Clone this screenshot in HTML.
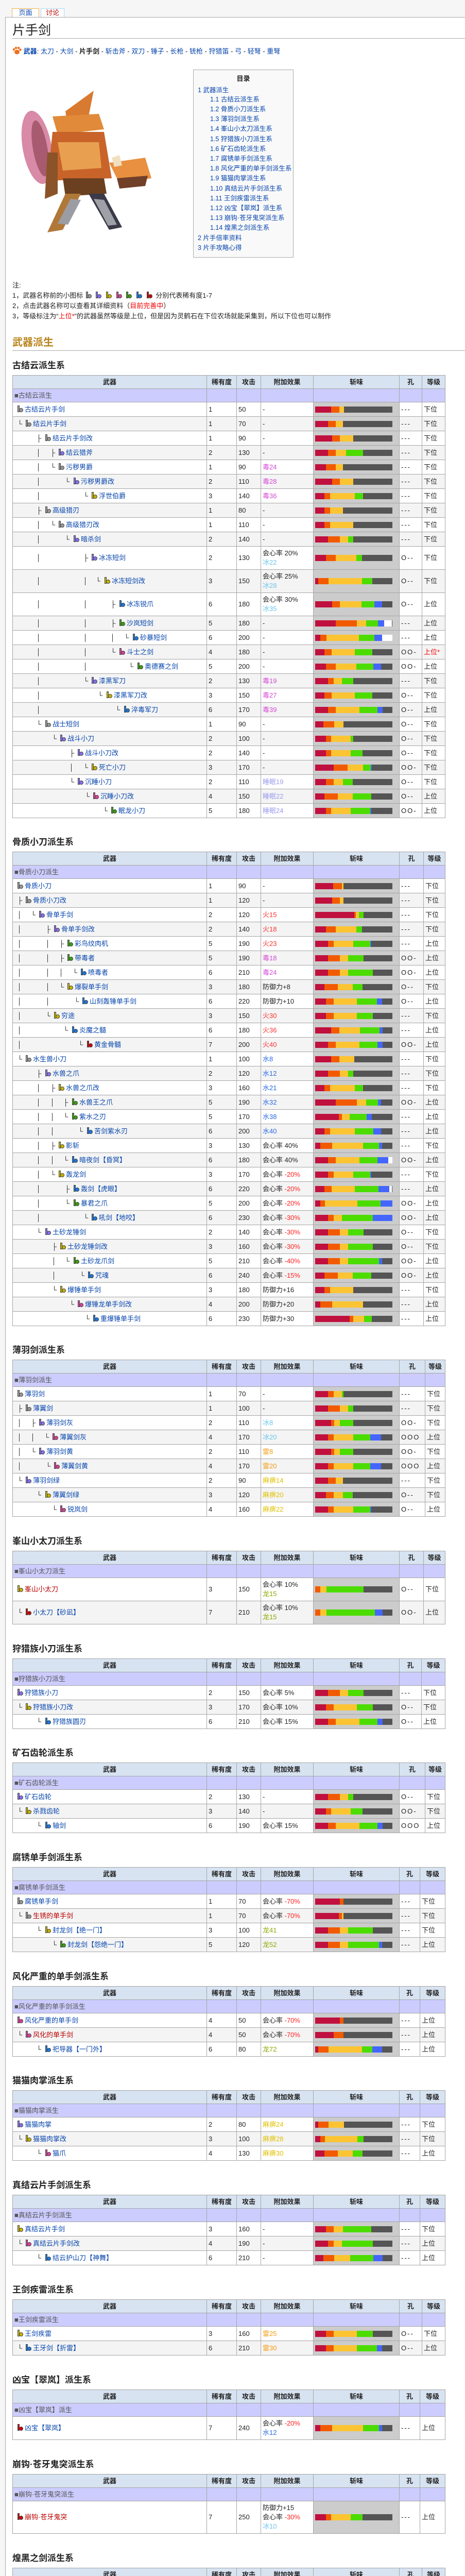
<!DOCTYPE html>
<html style="height:5121px;overflow:hidden"><head><meta charset="utf-8"><style>
html,body{margin:0;padding:0}
body{width:903px;height:5121px;background:#f6f6f6;position:relative;font-family:"Liberation Sans","Noto Sans CJK SC",sans-serif;font-size:13px;color:#222;overflow:hidden}
#c{position:absolute;left:10px;top:33px;width:893px;height:5080px;background:#fff;border-left:1px solid #a7a7a7;border-top:1px solid #a7a7a7}
.tab{position:absolute;top:16px;height:16px;border:1px solid #a7d7f9;border-bottom:none;background:#fff;font-size:13px;line-height:16px;text-align:center}
a,.bl{color:#0645ad;text-decoration:none}
.red{color:#e00}
.rl{color:#ba0000}
.abs{position:absolute}
.toc{position:absolute;left:375px;top:135px;width:193px;height:363px;border:1px solid #aaa;background:#f9f9f9}
.toc div{position:absolute;white-space:nowrap;color:#0645ad;font-size:12.5px;line-height:18px}
.sec{position:absolute;left:24px;width:840px}
.h3{height:66px;position:relative}
.h3 div{position:absolute;top:37px;left:0;font-weight:bold;font-size:17px;line-height:22px;white-space:nowrap}
table{border-collapse:collapse;table-layout:fixed;width:840px}
td,th{border:1px solid #a5a5a5;padding:0 0 0 3px;font-size:13px;white-space:nowrap;overflow:hidden;line-height:18px}
tr{height:28px}
tr.hd{height:26px}
tr.d{height:45px}
tr.t{height:63px}
th{background:#d7e3f1;font-weight:bold;text-align:center;padding:0}
tr.g td{background:#ccf;color:#555}
tbody tr:nth-child(even){background:#f4f4f4}
td.w{position:relative}
td.w i,td.w span{position:absolute;top:50%;margin-top:-9px;line-height:18px;font-style:normal;white-space:nowrap}
td.w span{color:#0645ad}
td.w span.rl{color:#ba0000}
td.s{background:#ccc !important;padding-left:3px}
p{margin:0;display:flex;width:150px;height:12px;background:#555}
u{display:block;height:12px;text-decoration:none;flex:none}
.R{background:#c0103e}.O{background:#f25a00}.Y{background:#fcc432}.G{background:#4cdc00}.B{background:#4466ff}.W{background:#fff}
td.k{letter-spacing:2px}
b{display:inline-block;position:relative;width:14px;height:15px;vertical-align:-3px;margin-right:2px}
b:before{content:"";position:absolute;left:2px;top:0;width:4px;height:13px;background:currentColor;border:1px solid #444;box-sizing:border-box}
b:after{content:"";position:absolute;left:5px;top:5px;width:8px;height:8px;border-radius:50%;background:currentColor;border:1px solid #444;box-sizing:border-box}
.c1{color:#999}.c2{color:#8a70f0}.c3{color:#c8b400}.c4{color:#d8409a}.c5{color:#3aa010}.c6{color:#1a78e0}.c7{color:#c00}
.ep{color:#d64ad6}.ei{color:#6cc6ee}.ef{color:#f33}.ew{color:#2a6ae8}.et{color:#f39c12}.ea{color:#e2c000}.es{color:#9c9cf0}.ed{color:#8fa800}.en{color:#f22}
</style></head><body>
<div id="c"></div>
<div class="tab" style="left:23px;width:51px;border-color:#f0b040"><span class="bl">页面</span></div>
<div class="tab" style="left:79px;width:44px"><span class="rl">讨论</span></div>
<div class="abs" style="left:24px;top:44px;font-size:25px;line-height:30px">片手剑</div>
<div class="abs" style="left:24px;top:74px;width:879px;height:1px;background:#aaa"></div>
<div class="abs" style="left:24px;top:90px;line-height:18px;white-space:nowrap">
<svg width="18" height="17" style="vertical-align:-3px" viewBox="0 0 18 17"><ellipse cx="9" cy="11" rx="5" ry="4.5" fill="#f07020"/><circle cx="3" cy="6" r="2.3" fill="#f07020"/><circle cx="7" cy="3" r="2.3" fill="#f07020"/><circle cx="12" cy="3" r="2.3" fill="#f07020"/><circle cx="15.5" cy="6.5" r="2.3" fill="#f07020"/></svg>
<strong class="bl">武器</strong>: <a>太刀</a> - <a>大剑</a> - <strong>片手剑</strong> - <a>斩击斧</a> - <a>双刀</a> - <a>锤子</a> - <a>长枪</a> - <a>铳枪</a> - <a>狩猎笛</a> - <a>弓</a> - <a>轻弩</a> - <a>重弩</a></div>

<svg class="abs" style="left:32px;top:176px" width="262" height="282" viewBox="0 0 262 282">
<ellipse cx="40" cy="110" rx="28" ry="72" fill="#d88aa6" transform="rotate(-10 40 110)"/>
<ellipse cx="46" cy="112" rx="14" ry="55" fill="#a85a70" transform="rotate(-10 46 112)"/>
<path d="M95 40 L150 0 L140 50 L100 70Z" fill="#d87a30"/>
<path d="M70 50 L160 45 L170 75 L80 85Z" fill="#e08a3a"/>
<path d="M70 80 L170 80 L185 170 L60 175Z" fill="#c8642a"/>
<path d="M80 100 L160 100 L165 150 L90 155Z" fill="#e8a050"/>
<path d="M60 120 L80 120 L80 200 L55 210Z" fill="#8a5428"/>
<path d="M90 170 L170 170 L175 200 L95 205Z" fill="#6a4020"/>
<path d="M95 200 L125 200 L90 270 L60 275 Z" fill="#b07838"/>
<path d="M140 200 L170 200 L205 265 L180 270Z" fill="#3a3a48"/>
<path d="M150 210 L170 212 L195 260 L178 262Z" fill="#a0a0a8"/>
<path d="M105 210 L125 212 L100 260 L80 258Z" fill="#9c9ca4"/>
<path d="M180 140 L250 130 L262 170 L200 180Z" fill="#e89040"/>
<path d="M195 170 L255 165 L250 185 L200 190Z" fill="#704028"/>
<path d="M185 130 L200 125 L205 145 L190 148Z" fill="#f0e0c0"/>
</svg>

<div class="toc">
<div style="left:0;width:193px;text-align:center;top:8px;font-weight:bold;color:#222;font-size:13px">目录</div>
<div style="left:8px;top:30px">1 武器派生</div>
<div style="left:32px;top:48px">1.1 古结云派生系</div>
<div style="left:32px;top:67px">1.2 骨质小刀派生系</div>
<div style="left:32px;top:86px">1.3 薄羽剑派生系</div>
<div style="left:32px;top:105px">1.4 峯山小太刀派生系</div>
<div style="left:32px;top:125px">1.5 狩猎族小刀派生系</div>
<div style="left:32px;top:144px">1.6 矿石齿轮派生系</div>
<div style="left:32px;top:163px">1.7 腐锈单手剑派生系</div>
<div style="left:32px;top:182px">1.8 风化严重的单手剑派生系</div>
<div style="left:32px;top:201px">1.9 猫猫肉掌派生系</div>
<div style="left:32px;top:221px">1.10 真结云片手剑派生系</div>
<div style="left:32px;top:240px">1.11 王剑疾雷派生系</div>
<div style="left:32px;top:259px">1.12 凶宝【翠岚】派生系</div>
<div style="left:32px;top:278px">1.13 崩钩·苍牙鬼突派生系</div>
<div style="left:32px;top:297px">1.14 煌黑之剑派生系</div>
<div style="left:8px;top:317px">2 片手倍率资料</div>
<div style="left:8px;top:336px">3 片手攻略心得</div>
</div>

<div class="abs" style="left:24px;top:544px;line-height:20px;white-space:nowrap">注:<br>1，武器名称前的小图标 <b class="c1"></b> <b class="c2"></b> <b class="c3"></b> <b class="c4"></b> <b class="c5"></b> <b class="c6"></b> <b class="c7"></b> 分别代表稀有度1-7<br>2，点击武器名称可以查看其详细资料（<span class="red">目前完善中</span>）<br>3，等级标注为“<span class="red">上位*</span>”的武器虽然等级是上位，但是因为灵鹤石在下位农场就能采集到，所以下位也可以制作</div>
<div class="abs" style="left:24px;top:652px;font-size:20px;line-height:26px;font-weight:bold;color:#b8841c">武器派生</div>
<div class="abs" style="left:24px;top:680px;width:879px;height:1px;background:#aaa"></div>

<!-- T1 -->
<div class="sec" style="top:662px"><div class="h3"><div>古结云派生系</div></div>
<table><colgroup><col style="width:377px"><col style="width:58px"><col style="width:47px"><col style="width:102px"><col style="width:167px"><col style="width:44px"><col style="width:45px"></colgroup>
<thead><tr class="hd"><th>武器</th><th>稀有度</th><th>攻击</th><th>附加效果</th><th>斩味</th><th>孔</th><th>等级</th></tr>
<tr class="hd g"><td>■古结云派生</td><td></td><td></td><td></td><td class="s" style="background:#ccf!important"></td><td></td><td></td></tr></thead><tbody>
<tr><td class="w"><span style="left:7px"><b class="c1"></b>古结云片手剑</span></td><td>1</td><td>50</td><td>-</td><td class="s"><p><u class="R" style="width:31px"></u><u class="O" style="width:16px"></u><u class="Y" style="width:9px"></u></p></td><td class="k">---</td><td>下位</td></tr>
<tr><td class="w"><i style="left:9px">└</i><span style="left:23px"><b class="c1"></b>结云片手剑</span></td><td>1</td><td>70</td><td>-</td><td class="s"><p><u class="R" style="width:25px"></u><u class="O" style="width:15px"></u><u class="Y" style="width:14px"></u></p></td><td class="k">---</td><td>下位</td></tr>
<tr><td class="w"><i style="left:46px">├</i><span style="left:61px"><b class="c1"></b>结云片手剑改</span></td><td>1</td><td>90</td><td>-</td><td class="s"><p><u class="R" style="width:33px"></u><u class="O" style="width:15px"></u><u class="Y" style="width:26px"></u></p></td><td class="k">---</td><td>下位</td></tr>
<tr><td class="w"><i style="left:46px">│</i><i style="left:73px">├</i><span style="left:87px"><b class="c2"></b>结云猎斧</span></td><td>2</td><td>130</td><td>-</td><td class="s"><p><u class="R" style="width:25px"></u><u class="O" style="width:15px"></u><u class="Y" style="width:20px"></u><u class="G" style="width:33px"></u></p></td><td class="k">---</td><td>下位</td></tr>
<tr><td class="w"><i style="left:46px">│</i><i style="left:73px">└</i><span style="left:87px"><b class="c1"></b>污秽男爵</span></td><td>1</td><td>90</td><td class="ep">毒24</td><td class="s"><p><u class="R" style="width:21px"></u><u class="O" style="width:19px"></u><u class="Y" style="width:14px"></u></p></td><td class="k">---</td><td>下位</td></tr>
<tr><td class="w"><i style="left:46px">│</i><i style="left:101px">└</i><span style="left:116px"><b class="c2"></b>污秽男爵改</span></td><td>2</td><td>110</td><td class="ep">毒28</td><td class="s"><p><u class="R" style="width:33px"></u><u class="O" style="width:15px"></u><u class="Y" style="width:26px"></u></p></td><td class="k">---</td><td>下位</td></tr>
<tr><td class="w"><i style="left:46px">│</i><i style="left:137px">└</i><span style="left:151px"><b class="c3"></b>浮世伯爵</span></td><td>3</td><td>140</td><td class="ep">毒36</td><td class="s"><p><u class="R" style="width:18px"></u><u class="O" style="width:11px"></u><u class="Y" style="width:48px"></u><u class="G" style="width:16px"></u></p></td><td class="k">---</td><td>下位</td></tr>
<tr><td class="w"><i style="left:46px">├</i><span style="left:61px"><b class="c1"></b>高级猎刃</span></td><td>1</td><td>80</td><td>-</td><td class="s"><p><u class="R" style="width:18px"></u><u class="O" style="width:11px"></u><u class="Y" style="width:25px"></u></p></td><td class="k">---</td><td>下位</td></tr>
<tr><td class="w"><i style="left:46px">│</i><i style="left:73px">└</i><span style="left:87px"><b class="c1"></b>高级猎刃改</span></td><td>1</td><td>110</td><td>-</td><td class="s"><p><u class="R" style="width:18px"></u><u class="O" style="width:11px"></u><u class="Y" style="width:45px"></u></p></td><td class="k">---</td><td>下位</td></tr>
<tr><td class="w"><i style="left:46px">│</i><i style="left:101px">└</i><span style="left:116px"><b class="c2"></b>暗杀剑</span></td><td>2</td><td>140</td><td>-</td><td class="s"><p><u class="R" style="width:25px"></u><u class="O" style="width:23px"></u><u class="Y" style="width:16px"></u><u class="G" style="width:10px"></u></p></td><td class="k">---</td><td>下位</td></tr>
<tr class="d"><td class="w"><i style="left:46px">│</i><i style="left:137px">├</i><span style="left:151px"><b class="c2"></b>冰冻短剑</span></td><td>2</td><td>130</td><td>会心率 20%<br><span class="ei">冰22</span></td><td class="s"><p><u class="R" style="width:21px"></u><u class="O" style="width:19px"></u><u class="Y" style="width:40px"></u><u class="G" style="width:11px"></u></p></td><td class="k">O--</td><td>下位</td></tr>
<tr class="d"><td class="w"><i style="left:46px">│</i><i style="left:137px">│</i><i style="left:161px">└</i><span style="left:176px"><b class="c3"></b>冰冻短剑改</span></td><td>3</td><td>150</td><td>会心率 25%<br><span class="ei">冰28</span></td><td class="s"><p><u class="R" style="width:6px"></u><u class="O" style="width:20px"></u><u class="Y" style="width:65px"></u><u class="G" style="width:20px"></u></p></td><td class="k">O--</td><td>下位</td></tr>
<tr class="d"><td class="w"><i style="left:46px">│</i><i style="left:137px">│</i><i style="left:190px">├</i><span style="left:205px"><b class="c6"></b>冰冻锐爪</span></td><td>6</td><td>180</td><td>会心率 30%<br><span class="ei">冰35</span></td><td class="s"><p><u class="R" style="width:33px"></u><u class="O" style="width:15px"></u><u class="Y" style="width:42px"></u><u class="G" style="width:25px"></u><u class="B" style="width:15px"></u></p></td><td class="k">O--</td><td>上位</td></tr>
<tr><td class="w"><i style="left:46px">│</i><i style="left:137px">│</i><i style="left:190px">├</i><span style="left:205px"><b class="c5"></b>沙岚短剑</span></td><td>5</td><td>180</td><td>-</td><td class="s"><p><u class="R" style="width:40px"></u><u class="O" style="width:41px"></u><u class="Y" style="width:18px"></u><u class="G" style="width:23px"></u><u class="B" style="width:12px"></u><u class="W" style="width:15px"></u></p></td><td class="k">---</td><td>上位</td></tr>
<tr><td class="w"><i style="left:46px">│</i><i style="left:137px">│</i><i style="left:190px">│</i><i style="left:216px">└</i><span style="left:231px"><b class="c6"></b>砂暴短剑</span></td><td>6</td><td>200</td><td>-</td><td class="s"><p><u class="R" style="width:10px"></u><u class="O" style="width:12px"></u><u class="Y" style="width:63px"></u><u class="G" style="width:30px"></u><u class="B" style="width:15px"></u><u class="W" style="width:20px"></u></p></td><td class="k">---</td><td>上位</td></tr>
<tr><td class="w"><i style="left:46px">│</i><i style="left:137px">│</i><i style="left:190px">└</i><span style="left:205px"><b class="c4"></b>斗士之剑</span></td><td>4</td><td>180</td><td>-</td><td class="s"><p><u class="R" style="width:18px"></u><u class="O" style="width:14px"></u><u class="Y" style="width:45px"></u><u class="G" style="width:34px"></u></p></td><td class="k">OO-</td><td class="red">上位*</td></tr>
<tr><td class="w"><i style="left:46px">│</i><i style="left:137px">│</i><i style="left:225px">└</i><span style="left:240px"><b class="c5"></b>奥德赛之剑</span></td><td>5</td><td>200</td><td>-</td><td class="s"><p><u class="R" style="width:21px"></u><u class="O" style="width:19px"></u><u class="Y" style="width:40px"></u><u class="G" style="width:33px"></u><u class="B" style="width:15px"></u></p></td><td class="k">OO-</td><td>上位</td></tr>
<tr><td class="w"><i style="left:46px">│</i><i style="left:137px">└</i><span style="left:151px"><b class="c2"></b>漆黑军刀</span></td><td>2</td><td>130</td><td class="ep">毒19</td><td class="s"><p><u class="R" style="width:25px"></u><u class="O" style="width:11px"></u><u class="Y" style="width:16px"></u><u class="G" style="width:22px"></u></p></td><td class="k">---</td><td>下位</td></tr>
<tr><td class="w"><i style="left:46px">│</i><i style="left:165px">└</i><span style="left:180px"><b class="c3"></b>漆黑军刀改</span></td><td>3</td><td>150</td><td class="ep">毒27</td><td class="s"><p><u class="R" style="width:18px"></u><u class="O" style="width:14px"></u><u class="Y" style="width:45px"></u><u class="G" style="width:34px"></u></p></td><td class="k">O--</td><td>下位</td></tr>
<tr><td class="w"><i style="left:46px">│</i><i style="left:199px">└</i><span style="left:214px"><b class="c6"></b>淬毒军刀</span></td><td>6</td><td>170</td><td class="ep">毒39</td><td class="s"><p><u class="R" style="width:25px"></u><u class="O" style="width:15px"></u><u class="Y" style="width:46px"></u><u class="G" style="width:35px"></u><u class="B" style="width:10px"></u></p></td><td class="k">O--</td><td>上位</td></tr>
<tr><td class="w"><i style="left:46px">└</i><span style="left:61px"><b class="c1"></b>战士短剑</span></td><td>1</td><td>90</td><td>-</td><td class="s"><p><u class="R" style="width:16px"></u><u class="O" style="width:21px"></u><u class="Y" style="width:18px"></u></p></td><td class="k">O--</td><td>下位</td></tr>
<tr><td class="w"><i style="left:76px">└</i><span style="left:90px"><b class="c2"></b>战斗小刀</span></td><td>2</td><td>100</td><td>-</td><td class="s"><p><u class="R" style="width:21px"></u><u class="O" style="width:10px"></u><u class="Y" style="width:38px"></u><u class="G" style="width:5px"></u></p></td><td class="k">O--</td><td>下位</td></tr>
<tr><td class="w"><i style="left:110px">├</i><span style="left:124px"><b class="c2"></b>战斗小刀改</span></td><td>2</td><td>140</td><td>-</td><td class="s"><p><u class="R" style="width:21px"></u><u class="O" style="width:10px"></u><u class="Y" style="width:38px"></u><u class="G" style="width:23px"></u></p></td><td class="k">O--</td><td>下位</td></tr>
<tr><td class="w"><i style="left:110px">│</i><i style="left:137px">└</i><span style="left:151px"><b class="c3"></b>死亡小刀</span></td><td>3</td><td>170</td><td>-</td><td class="s"><p><u class="R" style="width:36px"></u><u class="O" style="width:27px"></u><u class="Y" style="width:30px"></u><u class="G" style="width:15px"></u><u class="B" style="width:2px"></u></p></td><td class="k">OO-</td><td>下位</td></tr>
<tr><td class="w"><i style="left:110px">└</i><span style="left:124px"><b class="c2"></b>沉睡小刀</span></td><td>2</td><td>110</td><td class="es">睡眠19</td><td class="s"><p><u class="R" style="width:21px"></u><u class="O" style="width:15px"></u><u class="Y" style="width:18px"></u><u class="G" style="width:19px"></u></p></td><td class="k">O--</td><td>下位</td></tr>
<tr><td class="w"><i style="left:140px">└</i><span style="left:154px"><b class="c4"></b>沉睡小刀改</span></td><td>4</td><td>150</td><td class="es">睡眠22</td><td class="s"><p><u class="R" style="width:18px"></u><u class="O" style="width:26px"></u><u class="Y" style="width:29px"></u><u class="G" style="width:36px"></u></p></td><td class="k">O--</td><td>上位</td></tr>
<tr><td class="w"><i style="left:175px">└</i><span style="left:189px"><b class="c5"></b>眠龙小刀</span></td><td>5</td><td>180</td><td class="es">睡眠24</td><td class="s"><p><u class="R" style="width:21px"></u><u class="O" style="width:10px"></u><u class="Y" style="width:38px"></u><u class="G" style="width:38px"></u><u class="B" style="width:2px"></u></p></td><td class="k">OO-</td><td>上位</td></tr>
</tbody></table></div>

<!-- T2 -->
<div class="sec" style="top:1587px"><div class="h3"><div>骨质小刀派生系</div></div>
<table><colgroup><col style="width:377px"><col style="width:58px"><col style="width:47px"><col style="width:102px"><col style="width:167px"><col style="width:47px"><col style="width:42px"></colgroup>
<thead><tr class="hd"><th>武器</th><th>稀有度</th><th>攻击</th><th>附加效果</th><th>斩味</th><th>孔</th><th>等级</th></tr>
<tr class="hd g"><td>■骨质小刀派生</td><td></td><td></td><td></td><td class="s" style="background:#ccf!important"></td><td></td><td></td></tr></thead><tbody>
<tr><td class="w"><span style="left:7px"><b class="c1"></b>骨质小刀</span></td><td>1</td><td>90</td><td>-</td><td class="s"><p><u class="R" style="width:35px"></u><u class="O" style="width:17px"></u><u class="Y" style="width:3px"></u></p></td><td class="k">---</td><td>下位</td></tr>
<tr><td class="w"><i style="left:9px">├</i><span style="left:23px"><b class="c1"></b>骨质小刀改</span></td><td>1</td><td>120</td><td>-</td><td class="s"><p><u class="R" style="width:33px"></u><u class="O" style="width:15px"></u><u class="Y" style="width:7px"></u></p></td><td class="k">---</td><td>下位</td></tr>
<tr><td class="w"><i style="left:9px">│</i><i style="left:35px">└</i><span style="left:49px"><b class="c2"></b>骨单手剑</span></td><td>2</td><td>120</td><td class="ef">火15</td><td class="s"><p><u class="R" style="width:76px"></u><u class="O" style="width:3px"></u><u class="Y" style="width:6px"></u><u class="G" style="width:9px"></u></p></td><td class="k">---</td><td>下位</td></tr>
<tr><td class="w"><i style="left:9px">│</i><i style="left:64px">├</i><span style="left:78px"><b class="c2"></b>骨单手剑改</span></td><td>2</td><td>140</td><td class="ef">火18</td><td class="s"><p><u class="R" style="width:21px"></u><u class="O" style="width:19px"></u><u class="Y" style="width:40px"></u><u class="G" style="width:11px"></u></p></td><td class="k">---</td><td>下位</td></tr>
<tr><td class="w"><i style="left:9px">│</i><i style="left:64px">│</i><i style="left:90px">├</i><span style="left:104px"><b class="c5"></b>彩鸟纹肉机</span></td><td>5</td><td>190</td><td class="ef">火23</td><td class="s"><p><u class="R" style="width:25px"></u><u class="O" style="width:11px"></u><u class="Y" style="width:38px"></u><u class="G" style="width:33px"></u><u class="B" style="width:2px"></u></p></td><td class="k">---</td><td>上位</td></tr>
<tr><td class="w"><i style="left:9px">│</i><i style="left:64px">│</i><i style="left:90px">├</i><span style="left:104px"><b class="c5"></b>带毒者</span></td><td>5</td><td>190</td><td class="ep">毒18</td><td class="s"><p><u class="R" style="width:25px"></u><u class="O" style="width:23px"></u><u class="Y" style="width:16px"></u><u class="G" style="width:30px"></u></p></td><td class="k">OO-</td><td>上位</td></tr>
<tr><td class="w"><i style="left:9px">│</i><i style="left:64px">│</i><i style="left:90px">│</i><i style="left:116px">└</i><span style="left:130px"><b class="c6"></b>喷毒者</span></td><td>6</td><td>210</td><td class="ep">毒24</td><td class="s"><p><u class="R" style="width:25px"></u><u class="O" style="width:23px"></u><u class="Y" style="width:16px"></u><u class="G" style="width:48px"></u></p></td><td class="k">OO-</td><td>上位</td></tr>
<tr><td class="w"><i style="left:9px">│</i><i style="left:64px">│</i><i style="left:90px">└</i><span style="left:104px"><b class="c3"></b>爆裂单手剑</span></td><td>3</td><td>180</td><td>防御力+8</td><td class="s"><p><u class="R" style="width:18px"></u><u class="O" style="width:26px"></u><u class="Y" style="width:29px"></u><u class="G" style="width:19px"></u></p></td><td class="k">O--</td><td>下位</td></tr>
<tr><td class="w"><i style="left:9px">│</i><i style="left:64px">│</i><i style="left:119px">└</i><span style="left:133px"><b class="c6"></b>山刻轰锤单手剑</span></td><td>6</td><td>220</td><td>防御力+10</td><td class="s"><p><u class="R" style="width:21px"></u><u class="O" style="width:15px"></u><u class="Y" style="width:45px"></u><u class="G" style="width:39px"></u><u class="B" style="width:10px"></u></p></td><td class="k">O--</td><td>上位</td></tr>
<tr><td class="w"><i style="left:9px">│</i><i style="left:64px">└</i><span style="left:78px"><b class="c3"></b>穷途</span></td><td>3</td><td>150</td><td class="ef">火30</td><td class="s"><p><u class="R" style="width:21px"></u><u class="O" style="width:15px"></u><u class="Y" style="width:45px"></u><u class="G" style="width:31px"></u></p></td><td class="k">---</td><td>下位</td></tr>
<tr><td class="w"><i style="left:9px">│</i><i style="left:98px">└</i><span style="left:113px"><b class="c6"></b>炎魔之髓</span></td><td>6</td><td>180</td><td class="ef">火36</td><td class="s"><p><u class="R" style="width:31px"></u><u class="O" style="width:16px"></u><u class="Y" style="width:40px"></u><u class="G" style="width:38px"></u><u class="B" style="width:6px"></u></p></td><td class="k">---</td><td>上位</td></tr>
<tr><td class="w"><i style="left:9px">│</i><i style="left:127px">└</i><span style="left:142px"><b class="c7"></b>黄金骨髓</span></td><td>7</td><td>200</td><td class="ef">火40</td><td class="s"><p><u class="R" style="width:25px"></u><u class="O" style="width:15px"></u><u class="Y" style="width:46px"></u><u class="G" style="width:35px"></u><u class="B" style="width:10px"></u></p></td><td class="k">OO-</td><td>上位</td></tr>
<tr><td class="w"><i style="left:9px">└</i><span style="left:23px"><b class="c1"></b>水生兽小刀</span></td><td>1</td><td>100</td><td class="ew">水8</td><td class="s"><p><u class="R" style="width:31px"></u><u class="O" style="width:16px"></u><u class="Y" style="width:29px"></u></p></td><td class="k">---</td><td>下位</td></tr>
<tr><td class="w"><i style="left:46px">├</i><span style="left:61px"><b class="c2"></b>水兽之爪</span></td><td>2</td><td>120</td><td class="ew">水12</td><td class="s"><p><u class="R" style="width:25px"></u><u class="O" style="width:23px"></u><u class="Y" style="width:16px"></u><u class="G" style="width:10px"></u></p></td><td class="k">---</td><td>下位</td></tr>
<tr><td class="w"><i style="left:46px">│</i><i style="left:73px">├</i><span style="left:87px"><b class="c3"></b>水兽之爪改</span></td><td>3</td><td>160</td><td class="ew">水21</td><td class="s"><p><u class="R" style="width:18px"></u><u class="O" style="width:11px"></u><u class="Y" style="width:48px"></u><u class="G" style="width:16px"></u></p></td><td class="k">---</td><td>下位</td></tr>
<tr><td class="w"><i style="left:46px">│</i><i style="left:73px">│</i><i style="left:98px">├</i><span style="left:113px"><b class="c5"></b>水兽王之爪</span></td><td>5</td><td>190</td><td class="ew">水32</td><td class="s"><p><u class="R" style="width:40px"></u><u class="O" style="width:41px"></u><u class="Y" style="width:18px"></u><u class="G" style="width:23px"></u><u class="B" style="width:6px"></u></p></td><td class="k">OO-</td><td>上位</td></tr>
<tr><td class="w"><i style="left:46px">│</i><i style="left:73px">│</i><i style="left:98px">└</i><span style="left:113px"><b class="c5"></b>紫水之刃</span></td><td>5</td><td>170</td><td class="ew">水38</td><td class="s"><p><u class="R" style="width:46px"></u><u class="O" style="width:6px"></u><u class="Y" style="width:15px"></u><u class="G" style="width:33px"></u><u class="B" style="width:10px"></u></p></td><td class="k">---</td><td>上位</td></tr>
<tr><td class="w"><i style="left:46px">│</i><i style="left:73px">│</i><i style="left:127px">└</i><span style="left:142px"><b class="c6"></b>苦剑紫水刃</span></td><td>6</td><td>200</td><td class="ew">水40</td><td class="s"><p><u class="R" style="width:18px"></u><u class="O" style="width:11px"></u><u class="Y" style="width:48px"></u><u class="G" style="width:36px"></u><u class="B" style="width:15px"></u></p></td><td class="k">---</td><td>上位</td></tr>
<tr><td class="w"><i style="left:46px">│</i><i style="left:73px">├</i><span style="left:87px"><b class="c3"></b>影斩</span></td><td>3</td><td>130</td><td>会心率 40%</td><td class="s"><p><u class="R" style="width:10px"></u><u class="O" style="width:23px"></u><u class="Y" style="width:60px"></u><u class="G" style="width:31px"></u><u class="B" style="width:6px"></u></p></td><td class="k">---</td><td>下位</td></tr>
<tr><td class="w"><i style="left:46px">│</i><i style="left:73px">│</i><i style="left:98px">└</i><span style="left:113px"><b class="c6"></b>暗夜剑【昏冥】</span></td><td>6</td><td>180</td><td>会心率 40%</td><td class="s"><p><u class="R" style="width:25px"></u><u class="O" style="width:15px"></u><u class="Y" style="width:46px"></u><u class="G" style="width:35px"></u><u class="B" style="width:21px"></u><u class="W" style="width:8px"></u></p></td><td class="k">OO-</td><td>上位</td></tr>
<tr><td class="w"><i style="left:46px">│</i><i style="left:73px">└</i><span style="left:87px"><b class="c3"></b>轰龙剑</span></td><td>3</td><td>170</td><td>会心率 <span class="en">-20%</span></td><td class="s"><p><u class="R" style="width:25px"></u><u class="O" style="width:11px"></u><u class="Y" style="width:38px"></u><u class="G" style="width:33px"></u><u class="B" style="width:2px"></u></p></td><td class="k">---</td><td>下位</td></tr>
<tr><td class="w"><i style="left:46px">│</i><i style="left:101px">├</i><span style="left:116px"><b class="c6"></b>轰剑【虎眼】</span></td><td>6</td><td>220</td><td>会心率 <span class="en">-20%</span></td><td class="s"><p><u class="R" style="width:18px"></u><u class="O" style="width:14px"></u><u class="Y" style="width:45px"></u><u class="G" style="width:46px"></u><u class="B" style="width:21px"></u><u class="W" style="width:5px"></u></p></td><td class="k">---</td><td>上位</td></tr>
<tr><td class="w"><i style="left:46px">│</i><i style="left:101px">└</i><span style="left:116px"><b class="c5"></b>暴君之爪</span></td><td>5</td><td>200</td><td>会心率 <span class="en">-20%</span></td><td class="s"><p><u class="R" style="width:10px"></u><u class="O" style="width:9px"></u><u class="Y" style="width:63px"></u><u class="G" style="width:45px"></u><u class="B" style="width:23px"></u></p></td><td class="k">OO-</td><td>上位</td></tr>
<tr><td class="w"><i style="left:46px">│</i><i style="left:137px">└</i><span style="left:151px"><b class="c6"></b>吼剑【地咬】</span></td><td>6</td><td>230</td><td>会心率 <span class="en">-30%</span></td><td class="s"><p><u class="R" style="width:25px"></u><u class="O" style="width:11px"></u><u class="Y" style="width:16px"></u><u class="G" style="width:60px"></u><u class="B" style="width:38px"></u></p></td><td class="k">OO-</td><td>上位</td></tr>
<tr><td class="w"><i style="left:46px">└</i><span style="left:61px"><b class="c2"></b>土砂龙锤剑</span></td><td>2</td><td>140</td><td>会心率 <span class="en">-30%</span></td><td class="s"><p><u class="R" style="width:25px"></u><u class="O" style="width:23px"></u><u class="Y" style="width:16px"></u><u class="G" style="width:30px"></u></p></td><td class="k">O--</td><td>下位</td></tr>
<tr><td class="w"><i style="left:76px">├</i><span style="left:90px"><b class="c3"></b>土砂龙锤剑改</span></td><td>3</td><td>160</td><td>会心率 <span class="en">-30%</span></td><td class="s"><p><u class="R" style="width:25px"></u><u class="O" style="width:23px"></u><u class="Y" style="width:16px"></u><u class="G" style="width:48px"></u></p></td><td class="k">O--</td><td>下位</td></tr>
<tr><td class="w"><i style="left:76px">│</i><i style="left:101px">└</i><span style="left:116px"><b class="c5"></b>土砂龙爪剑</span></td><td>5</td><td>210</td><td>会心率 <span class="en">-40%</span></td><td class="s"><p><u class="R" style="width:25px"></u><u class="O" style="width:23px"></u><u class="Y" style="width:16px"></u><u class="G" style="width:60px"></u><u class="B" style="width:6px"></u></p></td><td class="k">OO-</td><td>上位</td></tr>
<tr><td class="w"><i style="left:76px">│</i><i style="left:130px">└</i><span style="left:144px"><b class="c6"></b>咒魂</span></td><td>6</td><td>240</td><td>会心率 <span class="en">-15%</span></td><td class="s"><p><u class="R" style="width:18px"></u><u class="O" style="width:26px"></u><u class="Y" style="width:29px"></u><u class="G" style="width:36px"></u></p></td><td class="k">OO-</td><td>上位</td></tr>
<tr><td class="w"><i style="left:76px">└</i><span style="left:90px"><b class="c3"></b>爆锤单手剑</span></td><td>3</td><td>180</td><td>防御力+16</td><td class="s"><p><u class="R" style="width:18px"></u><u class="O" style="width:11px"></u><u class="Y" style="width:45px"></u></p></td><td class="k">---</td><td>下位</td></tr>
<tr><td class="w"><i style="left:110px">└</i><span style="left:124px"><b class="c4"></b>爆锤龙单手剑改</span></td><td>4</td><td>200</td><td>防御力+20</td><td class="s"><p><u class="R" style="width:10px"></u><u class="O" style="width:23px"></u><u class="Y" style="width:60px"></u></p></td><td class="k">---</td><td>上位</td></tr>
<tr><td class="w"><i style="left:140px">└</i><span style="left:154px"><b class="c6"></b>重爆锤单手剑</span></td><td>6</td><td>230</td><td>防御力+30</td><td class="s"><p><u class="R" style="width:67px"></u><u class="O" style="width:7px"></u><u class="Y" style="width:21px"></u><u class="G" style="width:15px"></u></p></td><td class="k">---</td><td>上位</td></tr>
</tbody></table></div>

<!-- T3 -->
<div class="sec" style="top:2573px"><div class="h3"><div>薄羽剑派生系</div></div>
<table><colgroup><col style="width:377px"><col style="width:58px"><col style="width:47px"><col style="width:102px"><col style="width:167px"><col style="width:50px"><col style="width:39px"></colgroup>
<thead><tr class="hd"><th>武器</th><th>稀有度</th><th>攻击</th><th>附加效果</th><th>斩味</th><th>孔</th><th>等级</th></tr>
<tr class="hd g"><td>■薄羽剑派生</td><td></td><td></td><td></td><td class="s" style="background:#ccf!important"></td><td></td><td></td></tr></thead><tbody>
<tr><td class="w"><span style="left:7px"><b class="c1"></b>薄羽剑</span></td><td>1</td><td>70</td><td>-</td><td class="s"><p><u class="R" style="width:25px"></u><u class="O" style="width:11px"></u><u class="Y" style="width:16px"></u><u class="G" style="width:3px"></u></p></td><td class="k">---</td><td>下位</td></tr>
<tr><td class="w"><i style="left:9px">├</i><span style="left:23px"><b class="c1"></b>薄翼剑</span></td><td>1</td><td>100</td><td>-</td><td class="s"><p><u class="R" style="width:25px"></u><u class="O" style="width:23px"></u><u class="Y" style="width:16px"></u><u class="G" style="width:10px"></u></p></td><td class="k">---</td><td>下位</td></tr>
<tr><td class="w"><i style="left:9px">│</i><i style="left:35px">├</i><span style="left:49px"><b class="c2"></b>薄羽剑灰</span></td><td>2</td><td>110</td><td class="ei">冰8</td><td class="s"><p><u class="R" style="width:31px"></u><u class="O" style="width:6px"></u><u class="Y" style="width:11px"></u><u class="G" style="width:26px"></u></p></td><td class="k">OO-</td><td>下位</td></tr>
<tr><td class="w"><i style="left:9px">│</i><i style="left:35px">│</i><i style="left:61px">└</i><span style="left:75px"><b class="c4"></b>薄翼剑灰</span></td><td>4</td><td>170</td><td class="ei">冰20</td><td class="s"><p><u class="R" style="width:25px"></u><u class="O" style="width:11px"></u><u class="Y" style="width:38px"></u><u class="G" style="width:33px"></u><u class="B" style="width:21px"></u></p></td><td class="k">OOO</td><td>上位</td></tr>
<tr><td class="w"><i style="left:9px">│</i><i style="left:35px">└</i><span style="left:49px"><b class="c2"></b>薄羽剑黄</span></td><td>2</td><td>110</td><td class="et">雷8</td><td class="s"><p><u class="R" style="width:31px"></u><u class="O" style="width:6px"></u><u class="Y" style="width:11px"></u><u class="G" style="width:26px"></u></p></td><td class="k">OO-</td><td>下位</td></tr>
<tr><td class="w"><i style="left:9px">│</i><i style="left:64px">└</i><span style="left:78px"><b class="c4"></b>薄翼剑黄</span></td><td>4</td><td>170</td><td class="et">雷20</td><td class="s"><p><u class="R" style="width:25px"></u><u class="O" style="width:11px"></u><u class="Y" style="width:38px"></u><u class="G" style="width:33px"></u><u class="B" style="width:21px"></u></p></td><td class="k">OOO</td><td>上位</td></tr>
<tr><td class="w"><i style="left:9px">└</i><span style="left:23px"><b class="c2"></b>薄羽剑绿</span></td><td>2</td><td>90</td><td class="ea">麻痹14</td><td class="s"><p><u class="R" style="width:25px"></u><u class="O" style="width:15px"></u><u class="Y" style="width:14px"></u></p></td><td class="k">---</td><td>下位</td></tr>
<tr><td class="w"><i style="left:46px">└</i><span style="left:61px"><b class="c3"></b>薄翼剑绿</span></td><td>3</td><td>120</td><td class="ea">麻痹20</td><td class="s"><p><u class="R" style="width:21px"></u><u class="O" style="width:15px"></u><u class="Y" style="width:18px"></u><u class="G" style="width:19px"></u></p></td><td class="k">O--</td><td>下位</td></tr>
<tr><td class="w"><i style="left:76px">└</i><span style="left:90px"><b class="c4"></b>锐岚剑</span></td><td>4</td><td>160</td><td class="ea">麻痹22</td><td class="s"><p><u class="R" style="width:25px"></u><u class="O" style="width:11px"></u><u class="Y" style="width:38px"></u><u class="G" style="width:33px"></u><u class="B" style="width:2px"></u></p></td><td class="k">O--</td><td>上位</td></tr>
</tbody></table></div>

<!-- T4 -->
<div class="sec" style="top:2944px"><div class="h3"><div>峯山小太刀派生系</div></div>
<table><colgroup><col style="width:377px"><col style="width:58px"><col style="width:47px"><col style="width:102px"><col style="width:167px"><col style="width:47px"><col style="width:42px"></colgroup>
<thead><tr class="hd"><th>武器</th><th>稀有度</th><th>攻击</th><th>附加效果</th><th>斩味</th><th>孔</th><th>等级</th></tr>
<tr class="hd g"><td>■峯山小太刀派生</td><td></td><td></td><td></td><td class="s" style="background:#ccf!important"></td><td></td><td></td></tr></thead><tbody>
<tr class="d"><td class="w"><span class="rl" style="left:7px"><b class="c3"></b>峯山小太刀</span></td><td>3</td><td>150</td><td>会心率 10%<br><span class="ed">龙15</span></td><td class="s"><p><u class="O" style="width:10px"></u><u class="Y" style="width:12px"></u><u class="G" style="width:72px"></u></p></td><td class="k">O--</td><td>下位</td></tr>
<tr class="d"><td class="w"><i style="left:9px">└</i><span style="left:23px"><b class="c7"></b>小太刀【砂凪】</span></td><td>7</td><td>210</td><td>会心率 10%<br><span class="ed">龙15</span></td><td class="s"><p><u class="O" style="width:10px"></u><u class="Y" style="width:12px"></u><u class="G" style="width:94px"></u><u class="B" style="width:15px"></u></p></td><td class="k">OO-</td><td>上位</td></tr>
</tbody></table></div>

<!-- T5 -->
<div class="sec" style="top:3153px"><div class="h3"><div>狩猎族小刀派生系</div></div>
<table><colgroup><col style="width:377px"><col style="width:58px"><col style="width:47px"><col style="width:102px"><col style="width:167px"><col style="width:43px"><col style="width:46px"></colgroup>
<thead><tr class="hd"><th>武器</th><th>稀有度</th><th>攻击</th><th>附加效果</th><th>斩味</th><th>孔</th><th>等级</th></tr>
<tr class="hd g"><td>■狩猎族小刀派生</td><td></td><td></td><td></td><td class="s" style="background:#ccf!important"></td><td></td><td></td></tr></thead><tbody>
<tr><td class="w"><span style="left:7px"><b class="c2"></b>狩猎族小刀</span></td><td>2</td><td>150</td><td>会心率 5%</td><td class="s"><p><u class="R" style="width:25px"></u><u class="O" style="width:23px"></u><u class="Y" style="width:16px"></u><u class="G" style="width:30px"></u></p></td><td class="k">---</td><td>下位</td></tr>
<tr><td class="w"><i style="left:9px">└</i><span style="left:23px"><b class="c3"></b>狩猎族小刀改</span></td><td>3</td><td>170</td><td>会心率 10%</td><td class="s"><p><u class="R" style="width:21px"></u><u class="O" style="width:15px"></u><u class="Y" style="width:45px"></u><u class="G" style="width:31px"></u></p></td><td class="k">O--</td><td>下位</td></tr>
<tr><td class="w"><i style="left:46px">└</i><span style="left:61px"><b class="c6"></b>狩猎族圆刃</span></td><td>6</td><td>210</td><td>会心率 15%</td><td class="s"><p><u class="R" style="width:25px"></u><u class="O" style="width:15px"></u><u class="Y" style="width:46px"></u><u class="G" style="width:35px"></u><u class="B" style="width:10px"></u></p></td><td class="k">O--</td><td>上位</td></tr>
</tbody></table></div>

<!-- T6 -->
<div class="sec" style="top:3355px"><div class="h3"><div>矿石齿轮派生系</div></div>
<table><colgroup><col style="width:377px"><col style="width:58px"><col style="width:47px"><col style="width:102px"><col style="width:167px"><col style="width:50px"><col style="width:39px"></colgroup>
<thead><tr class="hd"><th>武器</th><th>稀有度</th><th>攻击</th><th>附加效果</th><th>斩味</th><th>孔</th><th>等级</th></tr>
<tr class="hd g"><td>■矿石齿轮派生</td><td></td><td></td><td></td><td class="s" style="background:#ccf!important"></td><td></td><td></td></tr></thead><tbody>
<tr><td class="w"><span style="left:7px"><b class="c2"></b>矿石齿轮</span></td><td>2</td><td>130</td><td>-</td><td class="s"><p><u class="R" style="width:25px"></u><u class="O" style="width:23px"></u><u class="Y" style="width:16px"></u><u class="G" style="width:10px"></u></p></td><td class="k">O--</td><td>下位</td></tr>
<tr><td class="w"><i style="left:9px">└</i><span style="left:23px"><b class="c3"></b>杀戮齿轮</span></td><td>3</td><td>140</td><td>-</td><td class="s"><p><u class="R" style="width:21px"></u><u class="O" style="width:10px"></u><u class="Y" style="width:38px"></u><u class="G" style="width:23px"></u></p></td><td class="k">OO-</td><td>下位</td></tr>
<tr><td class="w"><i style="left:46px">└</i><span style="left:61px"><b class="c6"></b>轴剑</span></td><td>6</td><td>190</td><td>会心率 15%</td><td class="s"><p><u class="R" style="width:25px"></u><u class="O" style="width:15px"></u><u class="Y" style="width:46px"></u><u class="G" style="width:35px"></u><u class="B" style="width:10px"></u></p></td><td class="k">OOO</td><td>上位</td></tr>
</tbody></table></div>

<!-- T7 -->
<div class="sec" style="top:3558px"><div class="h3"><div>腐锈单手剑派生系</div></div>
<table><colgroup><col style="width:377px"><col style="width:58px"><col style="width:47px"><col style="width:102px"><col style="width:167px"><col style="width:40px"><col style="width:49px"></colgroup>
<thead><tr class="hd"><th>武器</th><th>稀有度</th><th>攻击</th><th>附加效果</th><th>斩味</th><th>孔</th><th>等级</th></tr>
<tr class="hd g"><td>■腐锈单手剑派生</td><td></td><td></td><td></td><td class="s" style="background:#ccf!important"></td><td></td><td></td></tr></thead><tbody>
<tr><td class="w"><span style="left:7px"><b class="c1"></b>腐锈单手剑</span></td><td>1</td><td>70</td><td>会心率 <span class="en">-70%</span></td><td class="s"><p><u class="R" style="width:48px"></u><u class="O" style="width:7px"></u></p></td><td class="k">---</td><td>下位</td></tr>
<tr><td class="w"><i style="left:9px">└</i><span class="rl" style="left:23px"><b class="c1"></b>生锈的单手剑</span></td><td>1</td><td>70</td><td>会心率 <span class="en">-70%</span></td><td class="s"><p><u class="R" style="width:46px"></u><u class="O" style="width:6px"></u><u class="Y" style="width:3px"></u></p></td><td class="k">---</td><td>下位</td></tr>
<tr><td class="w"><i style="left:46px">└</i><span style="left:61px"><b class="c3"></b>封龙剑【绝一门】</span></td><td>3</td><td>100</td><td class="ed">龙41</td><td class="s"><p><u class="R" style="width:25px"></u><u class="O" style="width:23px"></u><u class="Y" style="width:16px"></u><u class="G" style="width:48px"></u></p></td><td class="k">---</td><td>下位</td></tr>
<tr><td class="w"><i style="left:76px">└</i><span style="left:90px"><b class="c5"></b>封龙剑【怨绝一门】</span></td><td>5</td><td>120</td><td class="ed">龙52</td><td class="s"><p><u class="R" style="width:25px"></u><u class="O" style="width:23px"></u><u class="Y" style="width:16px"></u><u class="G" style="width:60px"></u><u class="B" style="width:6px"></u></p></td><td class="k">---</td><td>上位</td></tr>
</tbody></table></div>

<!-- T8 -->
<div class="sec" style="top:3789px"><div class="h3"><div>风化严重的单手剑派生系</div></div>
<table><colgroup><col style="width:377px"><col style="width:58px"><col style="width:47px"><col style="width:102px"><col style="width:167px"><col style="width:40px"><col style="width:49px"></colgroup>
<thead><tr class="hd"><th>武器</th><th>稀有度</th><th>攻击</th><th>附加效果</th><th>斩味</th><th>孔</th><th>等级</th></tr>
<tr class="hd g"><td>■风化严重的单手剑派生</td><td></td><td></td><td></td><td class="s" style="background:#ccf!important"></td><td></td><td></td></tr></thead><tbody>
<tr><td class="w"><span style="left:7px"><b class="c4"></b>风化严重的单手剑</span></td><td>4</td><td>50</td><td>会心率 <span class="en">-70%</span></td><td class="s"><p><u class="R" style="width:48px"></u><u class="O" style="width:7px"></u></p></td><td class="k">---</td><td>上位</td></tr>
<tr><td class="w"><i style="left:9px">└</i><span class="rl" style="left:23px"><b class="c4"></b>风化的单手剑</span></td><td>4</td><td>50</td><td>会心率 <span class="en">-70%</span></td><td class="s"><p><u class="R" style="width:36px"></u><u class="O" style="width:19px"></u></p></td><td class="k">---</td><td>上位</td></tr>
<tr><td class="w"><i style="left:46px">└</i><span style="left:61px"><b class="c6"></b>祀导器【一门外】</span></td><td>6</td><td>80</td><td class="ed">龙72</td><td class="s"><p><u class="R" style="width:6px"></u><u class="O" style="width:20px"></u><u class="Y" style="width:65px"></u><u class="G" style="width:20px"></u><u class="B" style="width:19px"></u></p></td><td class="k">---</td><td>上位</td></tr>
</tbody></table></div>

<!-- T9 -->
<div class="sec" style="top:3991px"><div class="h3"><div>猫猫肉掌派生系</div></div>
<table><colgroup><col style="width:377px"><col style="width:58px"><col style="width:47px"><col style="width:102px"><col style="width:167px"><col style="width:40px"><col style="width:49px"></colgroup>
<thead><tr class="hd"><th>武器</th><th>稀有度</th><th>攻击</th><th>附加效果</th><th>斩味</th><th>孔</th><th>等级</th></tr>
<tr class="hd g"><td>■猫猫肉掌派生</td><td></td><td></td><td></td><td class="s" style="background:#ccf!important"></td><td></td><td></td></tr></thead><tbody>
<tr><td class="w"><span style="left:7px"><b class="c2"></b>猫猫肉掌</span></td><td>2</td><td>80</td><td class="ea">麻痹24</td><td class="s"><p><u class="R" style="width:6px"></u><u class="O" style="width:20px"></u><u class="Y" style="width:30px"></u></p></td><td class="k">---</td><td>下位</td></tr>
<tr><td class="w"><i style="left:9px">└</i><span style="left:23px"><b class="c3"></b>猫猫肉掌改</span></td><td>3</td><td>100</td><td class="ea">麻痹28</td><td class="s"><p><u class="R" style="width:10px"></u><u class="O" style="width:9px"></u><u class="Y" style="width:63px"></u><u class="G" style="width:12px"></u></p></td><td class="k">---</td><td>下位</td></tr>
<tr><td class="w"><i style="left:46px">└</i><span style="left:61px"><b class="c4"></b>猫爪</span></td><td>4</td><td>130</td><td class="ea">麻痹30</td><td class="s"><p><u class="R" style="width:18px"></u><u class="O" style="width:26px"></u><u class="Y" style="width:29px"></u><u class="G" style="width:19px"></u></p></td><td class="k">---</td><td>上位</td></tr>
</tbody></table></div>

<!-- T10 -->
<div class="sec" style="top:4194px"><div class="h3"><div>真结云片手剑派生系</div></div>
<table><colgroup><col style="width:377px"><col style="width:58px"><col style="width:47px"><col style="width:102px"><col style="width:167px"><col style="width:40px"><col style="width:49px"></colgroup>
<thead><tr class="hd"><th>武器</th><th>稀有度</th><th>攻击</th><th>附加效果</th><th>斩味</th><th>孔</th><th>等级</th></tr>
<tr class="hd g"><td>■真结云片手剑派生</td><td></td><td></td><td></td><td class="s" style="background:#ccf!important"></td><td></td><td></td></tr></thead><tbody>
<tr><td class="w"><span style="left:7px"><b class="c3"></b>真结云片手剑</span></td><td>3</td><td>160</td><td>-</td><td class="s"><p><u class="R" style="width:21px"></u><u class="O" style="width:15px"></u><u class="Y" style="width:18px"></u><u class="G" style="width:55px"></u></p></td><td class="k">---</td><td>下位</td></tr>
<tr><td class="w"><i style="left:9px">└</i><span style="left:23px"><b class="c4"></b>真结云片手剑改</span></td><td>4</td><td>190</td><td>-</td><td class="s"><p><u class="R" style="width:25px"></u><u class="O" style="width:11px"></u><u class="Y" style="width:16px"></u><u class="G" style="width:60px"></u></p></td><td class="k">---</td><td>上位</td></tr>
<tr><td class="w"><i style="left:46px">└</i><span style="left:61px"><b class="c6"></b>结云护山刀【神舞】</span></td><td>6</td><td>210</td><td>-</td><td class="s"><p><u class="R" style="width:16px"></u><u class="O" style="width:21px"></u><u class="Y" style="width:31px"></u><u class="G" style="width:45px"></u><u class="B" style="width:18px"></u></p></td><td class="k">---</td><td>上位</td></tr>
</tbody></table></div>

<!-- T11 -->
<div class="sec" style="top:4397px"><div class="h3"><div>王剑疾雷派生系</div></div>
<table><colgroup><col style="width:377px"><col style="width:58px"><col style="width:47px"><col style="width:102px"><col style="width:167px"><col style="width:44px"><col style="width:45px"></colgroup>
<thead><tr class="hd"><th>武器</th><th>稀有度</th><th>攻击</th><th>附加效果</th><th>斩味</th><th>孔</th><th>等级</th></tr>
<tr class="hd g"><td>■王剑疾雷派生</td><td></td><td></td><td></td><td class="s" style="background:#ccf!important"></td><td></td><td></td></tr></thead><tbody>
<tr><td class="w"><span style="left:7px"><b class="c3"></b>王剑疾雷</span></td><td>3</td><td>160</td><td class="et">雷25</td><td class="s"><p><u class="R" style="width:21px"></u><u class="O" style="width:15px"></u><u class="Y" style="width:45px"></u><u class="G" style="width:31px"></u></p></td><td class="k">O--</td><td>下位</td></tr>
<tr><td class="w"><i style="left:9px">└</i><span style="left:23px"><b class="c6"></b>王牙剑【折雷】</span></td><td>6</td><td>210</td><td class="et">雷30</td><td class="s"><p><u class="R" style="width:21px"></u><u class="O" style="width:15px"></u><u class="Y" style="width:45px"></u><u class="G" style="width:39px"></u><u class="B" style="width:10px"></u></p></td><td class="k">O--</td><td>上位</td></tr>
</tbody></table></div>

<!-- T12 -->
<div class="sec" style="top:4572px"><div class="h3"><div>凶宝【翠岚】派生系</div></div>
<table><colgroup><col style="width:377px"><col style="width:58px"><col style="width:47px"><col style="width:102px"><col style="width:167px"><col style="width:40px"><col style="width:49px"></colgroup>
<thead><tr class="hd"><th>武器</th><th>稀有度</th><th>攻击</th><th>附加效果</th><th>斩味</th><th>孔</th><th>等级</th></tr>
<tr class="hd g"><td>■凶宝【翠岚】派生</td><td></td><td></td><td></td><td class="s" style="background:#ccf!important"></td><td></td><td></td></tr></thead><tbody>
<tr class="d"><td class="w"><span style="left:7px"><b class="c7"></b>凶宝【翠岚】</span></td><td>7</td><td>240</td><td>会心率 <span class="en">-20%</span><br><span class="ew">水12</span></td><td class="s"><p><u class="R" style="width:10px"></u><u class="O" style="width:23px"></u><u class="Y" style="width:60px"></u><u class="G" style="width:31px"></u><u class="B" style="width:6px"></u></p></td><td class="k">---</td><td>上位</td></tr>
</tbody></table></div>

<!-- T13 -->
<div class="sec" style="top:4736px"><div class="h3"><div>崩钩·苍牙鬼突派生系</div></div>
<table><colgroup><col style="width:377px"><col style="width:58px"><col style="width:47px"><col style="width:102px"><col style="width:167px"><col style="width:40px"><col style="width:49px"></colgroup>
<thead><tr class="hd"><th>武器</th><th>稀有度</th><th>攻击</th><th>附加效果</th><th>斩味</th><th>孔</th><th>等级</th></tr>
<tr class="hd g"><td>■崩钩·苍牙鬼突派生</td><td></td><td></td><td></td><td class="s" style="background:#ccf!important"></td><td></td><td></td></tr></thead><tbody>
<tr class="t"><td class="w"><span class="rl" style="left:7px"><b class="c7"></b>崩钩·苍牙鬼突</span></td><td>7</td><td>250</td><td>防御力+15<br>会心率 <span class="en">-30%</span><br><span class="ei">冰10</span></td><td class="s"><p><u class="R" style="width:21px"></u><u class="O" style="width:10px"></u><u class="Y" style="width:38px"></u><u class="G" style="width:23px"></u></p></td><td class="k">---</td><td>上位</td></tr>
</tbody></table></div>

<!-- T14 -->
<div class="sec" style="top:4918px"><div class="h3"><div>煌黑之剑派生系</div></div>
<table><colgroup><col style="width:377px"><col style="width:58px"><col style="width:47px"><col style="width:102px"><col style="width:167px"><col style="width:44px"><col style="width:45px"></colgroup>
<thead><tr class="hd"><th>武器</th><th>稀有度</th><th>攻击</th><th>附加效果</th><th>斩味</th><th>孔</th><th>等级</th></tr>
<tr class="hd g"><td>■煌黑之剑派生</td><td></td><td></td><td></td><td class="s" style="background:#ccf!important"></td><td></td><td></td></tr></thead><tbody>
<tr><td class="w"><span class="rl" style="left:7px"><b class="c6"></b>煌黑之剑</span></td><td>6</td><td>170</td><td class="ed">龙25</td><td class="s"><p><u class="R" style="width:36px"></u><u class="O" style="width:27px"></u><u class="Y" style="width:30px"></u><u class="G" style="width:15px"></u><u class="B" style="width:18px"></u></p></td><td class="k">O--</td><td>上位</td></tr>
<tr><td class="w"><i style="left:9px">└</i><span class="rl" style="left:23px"><b class="c7"></b>煌黑剑殷璀妖煌</span></td><td>7</td><td>190</td><td class="ed">龙37</td><td class="s"><p><u class="R" style="width:36px"></u><u class="O" style="width:27px"></u><u class="Y" style="width:30px"></u><u class="G" style="width:15px"></u><u class="B" style="width:18px"></u><u class="W" style="width:23px"></u></p></td><td class="k">O--</td><td>上位</td></tr>
</tbody></table></div>

</body></html>
